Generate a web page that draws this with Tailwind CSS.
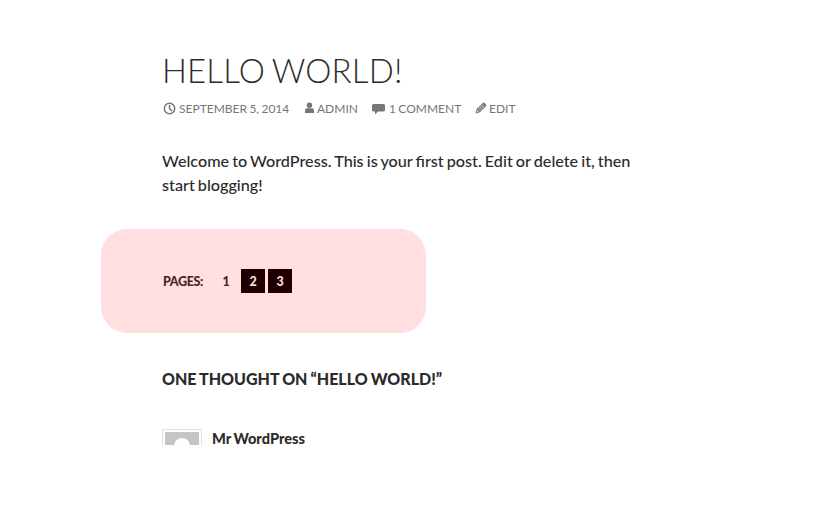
<!DOCTYPE html>
<html lang="en">
<head>
  <meta charset="UTF-8">
  <meta name="viewport" content="width=device-width, initial-scale=1.0">
  <title>Hello world!</title>
  <script src="https://cdn.jsdelivr.net/npm/@tailwindcss/browser@4"></script>
</head>
<body class="bg-white h-screen overflow-hidden font-['Lato',sans-serif] text-[#2b2b2b]">
  <article class="pl-[162px] pt-[50px]">
    <h1 class="text-[33px] leading-[40px] font-light tracking-[0.15px] [word-spacing:-1.5px] uppercase whitespace-nowrap">Hello world!</h1>

    <div class="flex items-center mt-[9px] h-[20px] text-[12px] leading-[20px] [word-spacing:-0.7px] uppercase text-[#767676] whitespace-nowrap">
      <span class="flex items-center w-[142px]">
        <svg class="w-[13px] h-[13px] ml-[1px] mr-[3px] -mt-[2px]" viewBox="0 0 13 13" fill="none" stroke="#767676" stroke-width="1.5"><circle cx="6.5" cy="6.5" r="5.2"/><path d="M6.500 3V6.500L9 9"/></svg>
        September 5, 2014
      </span>
      <span class="flex items-center w-[68px]">
        <svg class="w-[10px] h-[12px] ml-px mr-[2px] -mt-[2px]" viewBox="0 0 10 12" fill="#767676"><circle cx="4.500" cy="3.200" r="2.700"/><path d="M0 11V8.500Q0 6.300 2 6.300H7Q9 6.300 9 8.500V11Z"/></svg>
        Admin
      </span>
      <span class="flex items-center w-[103px]">
        <svg class="w-[13px] h-[12px] mr-[4px]" viewBox="0 0 13 12" fill="#767676"><path d="M1.500 1H11.500Q13 1 13 2.500V7Q13 8.500 11.500 8.500H6L3 11.500V8.500H1.500Q0 8.500 0 7V2.500Q0 1 1.500 1Z"/></svg>
        1 Comment
      </span>
      <span class="flex items-center">
        <svg class="w-[12px] h-[12px] mr-[2px] -mt-[2px]" viewBox="0 0 12 12"><path fill="#767676" d="M.6 11.400L1.600 7L7.500 1.200Q8.700 0 9.900 1.200L10.800 2.100Q12 3.300 10.800 4.500L5 10.300Z"/><path fill="none" stroke="#fff" stroke-width=".7" d="M3.200 7.500L8 2.700M4.600 8.900L9.400 4.100"/><path fill="#fff" d="M2.300 8.300L3.700 9.700L1.900 10.100Z"/></svg>
        Edit
      </span>
    </div>

    <p class="mt-[30px] w-[480px] text-[16.2px] leading-[24px] font-medium [word-spacing:-1px]">Welcome to WordPress. This is your first post. Edit or delete it, then<br>start blogging!</p>

    <div class="-ml-[61px] mt-[32px] w-[325px] h-[104px] rounded-[26px] bg-[#ffdfdf] flex items-center pl-[62px] text-[12.5px] leading-[25px] font-black text-[#4a2427]">
      <span class="w-[51px] uppercase tracking-[-0.35px]">Pages:</span>
      <span class="w-6 h-6 mr-[3px] text-center">1</span>
      <a class="w-6 h-6 mr-[3px] text-center bg-[#1f0000] text-[#ffdfdf]">2</a>
      <a class="w-6 h-6 text-center bg-[#1f0000] text-[#ffdfdf]">3</a>
    </div>
  </article>

  <section class="pl-[162px] mt-[34px]">
    <h2 class="text-[16px] leading-[24px] font-black [word-spacing:-0.8px] uppercase whitespace-nowrap">One thought on “Hello world!”</h2>
    <div class="flex mt-[38px]">
      <div class="w-[40px] h-[16px] overflow-hidden shrink-0 border border-b-0 border-[#e0e0e0] p-[2px] pb-0">
        <svg class="block w-[34px] h-[34px] bg-[#c5c5c5]" viewBox="0 0 34 34" fill="#fff"><circle cx="17" cy="14" r="8"/></svg>
      </div>
      <b class="ml-[10px] text-[14.6px] leading-[19px] font-black [word-spacing:-1px] whitespace-nowrap">Mr WordPress</b>
    </div>
  </section>
</body>
</html>
